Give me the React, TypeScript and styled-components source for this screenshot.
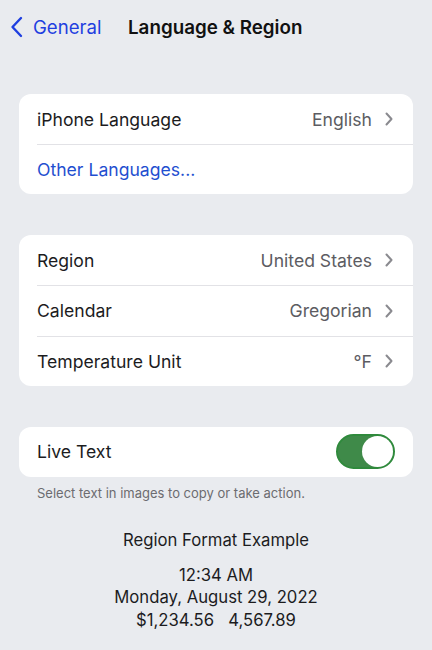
import React from "react";
import styled, { createGlobalStyle } from "styled-components";

const GlobalStyle = createGlobalStyle`
  html, body {
    margin: 0;
    padding: 0;
    background: #e9ebef;
  }
  body {
    font-family: Inter, "Noto Sans", sans-serif;
    -webkit-font-smoothing: antialiased;
  }
  * {
    box-sizing: border-box;
  }
`;

const Page = styled.div`
  width: 432px;
  height: 650px;
  background: #e9ebef;
  overflow: hidden;
`;

const NavBar = styled.div`
  display: flex;
  align-items: center;
  height: 54px;
  padding-left: 10px;
`;

const BackLink = styled.div`
  display: flex;
  align-items: center;
  gap: 10px;
  color: #1f3fe0;
  font-size: 18.6px;
  width: 118px;
`;

const Title = styled.div`
  font-size: 18.8px;
  font-weight: 600;
  color: #111;
`;

const Content = styled.div`
  padding: 40px 19px 0 19px;
  display: flex;
  flex-direction: column;
`;

const Card = styled.div<{ $gap?: number }>`
  background: #fff;
  border-radius: 12px;
  overflow: hidden;
  margin-bottom: ${(p) => p.$gap ?? 41}px;
`;

const Row = styled.div<{ $h?: number }>`
  display: flex;
  align-items: center;
  height: ${(p) => p.$h ?? 50}px;
  margin-left: 18px;
  padding-right: 20px;
  & + & {
    border-top: 1px solid #e2e2e6;
  }
`;

const Label = styled.div<{ $blue?: boolean }>`
  flex: 1;
  font-size: 17.6px;
  color: ${(p) => (p.$blue ? "#1f4fd0" : "#1c1c1e")};
`;

const Value = styled.div`
  font-size: 17.6px;
  color: #5c5c62;
  margin-right: 13px;
`;

const Toggle = styled.div<{ $on: boolean }>`
  width: 59px;
  height: 35px;
  border-radius: 18px;
  background: ${(p) => (p.$on ? "#3f8a49" : "#e5e5ea")};
  border: 2px solid ${(p) => (p.$on ? "#2f8a3c" : "#e5e5ea")};
  display: flex;
  justify-content: ${(p) => (p.$on ? "flex-end" : "flex-start")};
  margin-right: -2px;
`;

const Knob = styled.div`
  width: 31px;
  height: 31px;
  border-radius: 50%;
  background: #fff;
`;

const Footnote = styled.div`
  font-size: 13px;
  color: #6c6c70;
  padding: 8px 0 0 18px;
`;

const Example = styled.div`
  text-align: center;
  color: #1c1c1e;
  font-size: 16.7px;
  padding-top: 28px;
`;

const ExampleTitle = styled.div`
  line-height: 22px;
  margin-bottom: 13px;
`;

const ExampleLine = styled.div`
  line-height: 22.5px;
`;

const Chevron = ({ color = "#8a8a8f" }: { color?: string }) => (
  <svg width="8" height="14" viewBox="0 0 8 14" fill="none">
    <path d="M1.5 1.5 L6.5 7 L1.5 12.5" stroke={color} strokeWidth="2" strokeLinecap="round" strokeLinejoin="round" />
  </svg>
);

const BackChevron = () => (
  <svg width="13" height="22" viewBox="0 0 13 22" fill="none">
    <path d="M11 2 L2.5 11 L11 20" stroke="#1f3fe0" strokeWidth="2.4" strokeLinecap="round" strokeLinejoin="round" />
  </svg>
);

const App: React.FC = () => {
  return (
    <Page>
      <GlobalStyle />
      <NavBar>
        <BackLink>
          <BackChevron />
          General
        </BackLink>
        <Title>Language &amp; Region</Title>
      </NavBar>
      <Content>
        <Card>
          <Row>
            <Label>iPhone Language</Label>
            <Value>English</Value>
            <Chevron />
          </Row>
          <Row>
            <Label $blue>Other Languages...</Label>
          </Row>
        </Card>
        <Card>
          <Row $h={50.3}>
            <Label>Region</Label>
            <Value>United States</Value>
            <Chevron />
          </Row>
          <Row $h={50.3}>
            <Label>Calendar</Label>
            <Value>Gregorian</Value>
            <Chevron />
          </Row>
          <Row $h={50.3}>
            <Label>Temperature Unit</Label>
            <Value>°F</Value>
            <Chevron />
          </Row>
        </Card>
        <Card $gap={0}>
          <Row>
            <Label>Live Text</Label>
            <Toggle $on>
              <Knob />
            </Toggle>
          </Row>
        </Card>
        <Footnote>Select text in images to copy or take action.</Footnote>
        <Example>
          <ExampleTitle>Region Format Example</ExampleTitle>
          <ExampleLine>12:34 AM</ExampleLine>
          <ExampleLine>Monday, August 29, 2022</ExampleLine>
          <ExampleLine>$1,234.56&nbsp;&nbsp;&nbsp;4,567.89</ExampleLine>
        </Example>
      </Content>
    </Page>
  );
};

export default App;
